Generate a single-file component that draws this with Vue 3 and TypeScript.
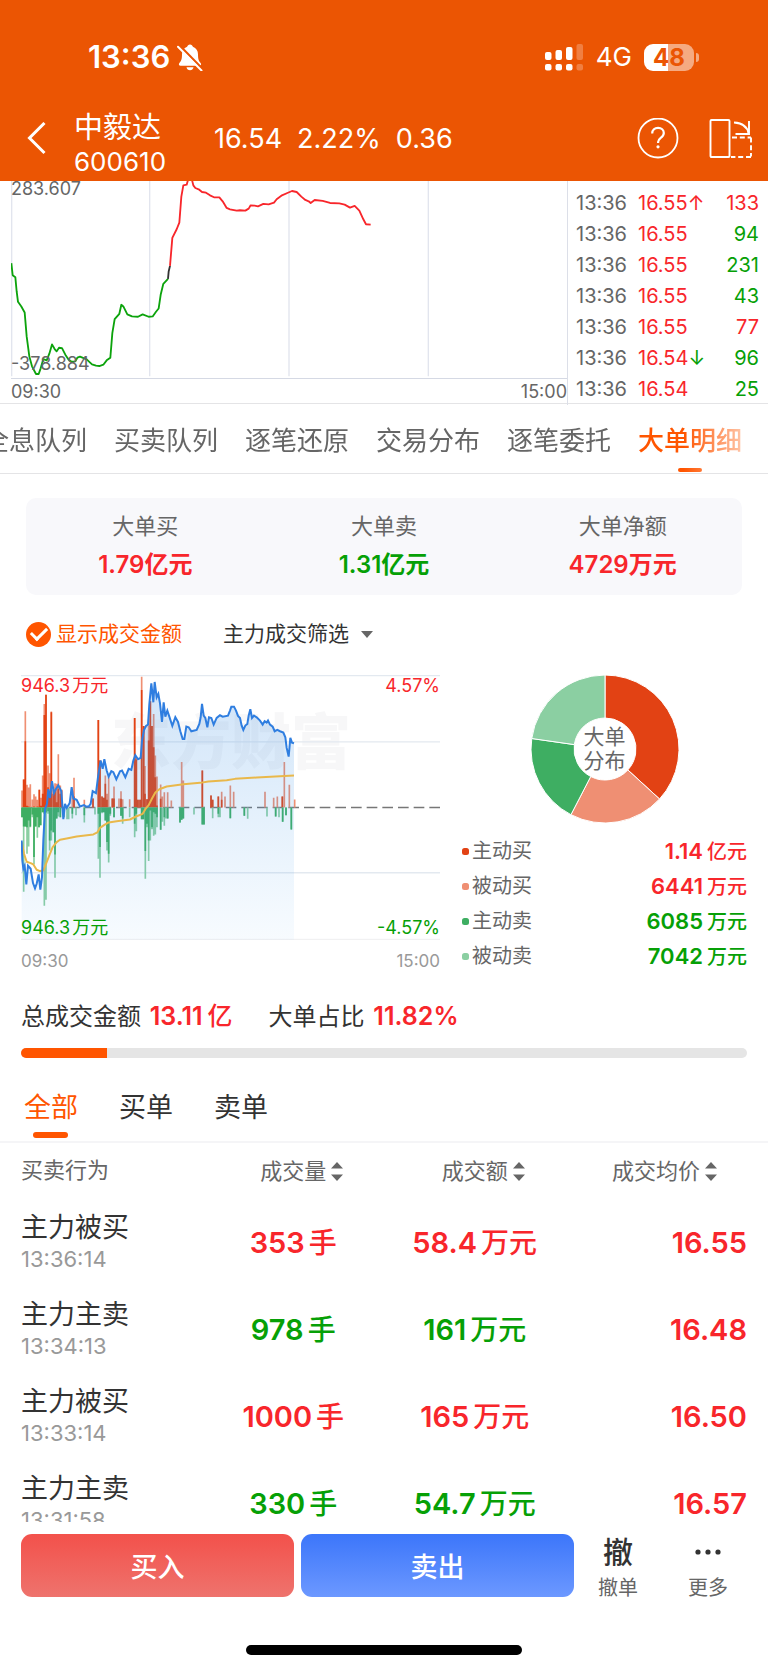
<script setup lang="ts">
import { ref, computed } from 'vue'

type Tone = 'up' | 'down'

interface Tick { price: string; mark?: '↑' | '↓'; markTone?: Tone; qty: string; tone: Tone }
const ticks: Tick[] = [
  { price: '16.55', mark: '↑', markTone: 'up', qty: '133', tone: 'up' },
  { price: '16.55', qty: '94', tone: 'down' },
  { price: '16.55', qty: '231', tone: 'down' },
  { price: '16.55', qty: '43', tone: 'down' },
  { price: '16.55', qty: '77', tone: 'up' },
  { price: '16.54', mark: '↓', markTone: 'down', qty: '96', tone: 'down' },
  { price: '16.54', qty: '25', tone: 'down' },
]

const tabs = ['全息队列', '买卖队列', '逐笔还原', '交易分布', '逐笔委托', '大单明细']
const activeTab = ref('大单明细')

const stats: { label: string; value: string; tone: Tone }[] = [
  { label: '大单买', value: '1.79亿元', tone: 'up' },
  { label: '大单卖', value: '1.31亿元', tone: 'down' },
  { label: '大单净额', value: '4729万元', tone: 'up' },
]

const showAmount = ref(true)
const filters = ['全部', '买单', '卖单']
const activeFilter = ref('全部')

interface Share { label: string; num: string; unit: string; amount: number; color: string; tone: Tone }
const shares: Share[] = [
  { label: '主动买', num: '1.14', unit: '亿元', amount: 11400, color: '#e24214', tone: 'up' },
  { label: '被动买', num: '6441', unit: '万元', amount: 6441, color: '#ef8f73', tone: 'up' },
  { label: '主动卖', num: '6085', unit: '万元', amount: 6085, color: '#3eae62', tone: 'down' },
  { label: '被动卖', num: '7042', unit: '万元', amount: 7042, color: '#8bcfa2', tone: 'down' },
]

const slices = computed(() => {
  const total = shares.reduce((s, x) => s + x.amount, 0)
  const at = (r: number, a: number) => `${(74 + r * Math.sin(a)).toFixed(2)} ${(74 - r * Math.cos(a)).toFixed(2)}`
  let angle = 0
  return shares.map((s) => {
    const start = angle
    angle += (s.amount / total) * Math.PI * 2
    const large = angle - start > Math.PI ? 1 : 0
    return {
      color: s.color,
      d: `M${at(74, start)}A74 74 0 ${large} 1 ${at(74, angle)}L${at(31, angle)}A31 31 0 ${large} 0 ${at(31, start)}Z`,
    }
  })
})

const ratio = 11.82

interface Order { side: string; time: string; vol: string; amount: string; unit: string; price: string; tone: Tone }
const orders: Order[] = [
  { side: '主力被买', time: '13:36:14', vol: '353', amount: '58.4', unit: '万元', price: '16.55', tone: 'up' },
  { side: '主力主卖', time: '13:34:13', vol: '978', amount: '161', unit: '万元', price: '16.48', tone: 'down' },
  { side: '主力被买', time: '13:33:14', vol: '1000', amount: '165', unit: '万元', price: '16.50', tone: 'up' },
  { side: '主力主卖', time: '13:31:58', vol: '330', amount: '54.7', unit: '万元', price: '16.57', tone: 'down' },
]

/* Large-order bars: [x, end of active part, end of passive part]; 441 is the zero line. */
const ZERO = 441
type Bar = [number, number, number]
const buys: Bar[] = [
  [66, 441, 390], [71, 357, 357], [76, 242, 152], [81, 436, 373], [86, 438, 381], [91, 441, 371], [97, 441, 417],
  [102, 438, 401], [107, 441, 408], [112, 438, 418], [118, 388, 388], [123, 436, 412], [128, 400, 345],
  [133, 163, 130], [138, 102, 102], [144, 380, 315], [149, 400, 338], [154, 155, 153], [160, 400, 380],
  [165, 390, 368], [170, 425, 370], [175, 385, 281], [181, 400, 375], [186, 425, 388], [217, 441, 390],
  [222, 408, 352], [253, 441, 418], [279, 414, 414], [295, 178, 178], [300, 300, 300], [306, 408, 408],
  [311, 412, 412], [316, 370, 345], [321, 418, 400], [326, 441, 350], [337, 414, 414], [342, 414, 378],
  [357, 441, 414], [363, 415, 392], [368, 441, 416], [389, 441, 416], [404, 172, 172], [409, 297, 290],
  [414, 418, 418], [420, 418, 418], [425, 88, 48], [431, 196, 196], [435, 400, 316], [441, 416, 416],
  [446, 240, 195], [451, 122, 122], [456, 196, 196], [461, 260, 160], [466, 350, 285], [471, 435, 348],
  [482, 415, 372], [487, 441, 408], [493, 441, 395], [503, 441, 395], [514, 441, 420], [545, 441, 304],
  [550, 441, 360], [607, 330, 330], [633, 405, 405], [638, 418, 418], [655, 408, 408], [665, 418, 394],
  [675, 441, 408], [691, 441, 375], [701, 441, 394], [795, 441, 394], [821, 441, 412], [832, 441, 408],
  [847, 408, 408], [853, 441, 304], [868, 441, 373], [884, 441, 417],
]
const sells: Bar[] = [
  [66, 470, 470], [71, 498, 694], [76, 498, 498], [81, 500, 580], [86, 480, 558], [91, 498, 500], [97, 462, 470],
  [102, 590, 612], [107, 498, 498], [112, 470, 532], [117, 500, 500], [122, 494, 494], [128, 455, 455],
  [133, 460, 736], [138, 456, 718], [144, 452, 460], [149, 540, 570], [154, 510, 540], [160, 515, 515],
  [165, 582, 652], [170, 474, 474], [175, 455, 468], [181, 470, 470], [191, 470, 470], [201, 441, 476],
  [206, 441, 476], [217, 460, 474], [228, 441, 464], [253, 464, 486], [285, 441, 462], [295, 460, 595],
  [300, 560, 652], [306, 455, 458], [311, 455, 455], [316, 480, 480], [321, 545, 570], [326, 580, 606],
  [331, 460, 466], [342, 470, 470], [363, 466, 466], [368, 474, 490], [389, 441, 470], [404, 490, 530],
  [409, 460, 512], [425, 476, 476], [430, 476, 476], [436, 572, 655], [441, 490, 500], [446, 540, 602],
  [451, 450, 540], [456, 500, 506], [461, 455, 526], [466, 460, 522], [471, 470, 500], [482, 508, 508],
  [487, 441, 484], [493, 470, 496], [498, 441, 474], [503, 474, 474], [540, 486, 486], [545, 478, 478],
  [550, 474, 474], [582, 441, 462], [607, 492, 492], [612, 492, 492], [638, 441, 473], [655, 460, 470],
  [660, 441, 470], [691, 473, 473], [733, 466, 466], [743, 441, 475], [801, 441, 468], [827, 468, 468],
  [837, 441, 470], [848, 484, 484], [858, 464, 464], [874, 507, 507],
]
const barPath = (list: Bar[], pick: 1 | 2) =>
  list.filter((b) => b[pick] !== ZERO).map((b) => `M${b[0]} ${ZERO}V${b[pick]}`).join('')

const pricePoints =
  '65,540 67,600 70,625 74,616 79,672 84,616 92,625 99,668 105,684 110,670 116,642 121,688 126,650 130,540 135,445 141,430 145,386 150,412 156,362 162,398 168,385 175,374 184,392 190,476 195,430 200,442 205,434 209,428 215,380 220,414 230,418 240,438 252,434 258,438 266,438 272,430 278,392 288,398 294,350 302,300 308,325 313,296 320,330 326,348 334,332 340,335 349,356 360,332 366,330 376,350 386,325 394,328 400,300 406,284 414,296 422,292 426,240 432,208 438,196 444,192 448,130 454,68 460,125 464,64 470,110 475,100 480,128 486,184 491,125 496,168 502,150 508,168 517,196 526,170 534,184 541,212 548,235 553,235 559,198 566,200 574,212 590,208 598,190 602,170 606,130 611,165 616,172 622,200 627,170 634,172 641,192 650,172 660,164 668,168 684,165 690,150 694,138 702,138 708,150 714,166 720,172 725,195 730,208 736,195 742,190 746,165 751,146 756,172 762,165 770,170 780,180 788,192 794,182 800,186 804,180 810,192 818,198 824,212 832,208 840,212 850,216 856,230 860,262 866,288 871,232 876,246 882,248'
const averagePoints =
  '65,545 72,580 80,604 92,608 100,612 110,628 120,632 130,630 138,610 148,585 158,560 170,545 180,538 200,534 230,528 280,522 292,516 300,502 312,494 326,486 350,482 390,477 408,468 428,460 436,446 446,434 456,414 466,396 478,386 500,378 550,371 600,367 625,363 680,359 705,355 770,351 882,345'
const areaPoints = `65,838 ${pricePoints} 882,838`
</script>

<template>
  <main class="screen">
    <header class="top">
      <div class="status">
        <div class="clock">
          <span>13:36</span>
          <svg width="26" height="27" viewBox="0 0 26 27" fill="#fff" aria-label="静音">
            <path d="M13 0.500c-1.500 0-2.600 1-2.900 2.300C6.800 4 5 6.800 5 10.300c0 5-.8 6.700-2.600 8.700-1 1.100-.5 2.700 1.100 2.700h19c1.600 0 2.100-1.600 1.100-2.700-1.800-2-2.600-3.700-2.600-8.700 0-3.500-1.800-6.300-5.100-7.500C15.600 1.500 14.500.5 13 .5z" />
            <path d="M9.500 23.300h7c-.4 1.800-1.700 3-3.500 3s-3.100-1.200-3.500-3z" />
            <path d="M2.600 1.500L26 25.500" stroke="#eb5503" stroke-width="2.400" />
            <path d="M1 2.800L24.500 26.500" stroke="#fff" stroke-width="2" stroke-linecap="round" />
          </svg>
        </div>
        <div class="radio">
          <svg width="39" height="27" viewBox="0 0 39 27" fill="#fff" aria-hidden="true">
            <rect x="0" y="8" width="6.500" height="8" rx="2" />
            <rect x="10.500" y="6" width="6.500" height="10" rx="2" />
            <rect x="21" y="3" width="6.500" height="13" rx="2" />
            <rect x="31.500" y="0" width="6.500" height="16" rx="2" opacity=".25" />
            <rect x="0" y="20" width="6.500" height="6.500" rx="2" />
            <rect x="10.500" y="20" width="6.500" height="6.500" rx="2" />
            <rect x="21" y="20" width="6.500" height="6.500" rx="2" />
            <rect x="31.500" y="20" width="6.500" height="6.500" rx="2" opacity=".25" />
          </svg>
          <span class="net">4G</span>
          <span class="battery"><b>48</b></span>
        </div>
      </div>
      <div class="nav">
        <button class="icon-btn" type="button" aria-label="返回">
          <svg width="20" height="34" viewBox="0 0 20 34" fill="none" stroke="#fff" stroke-width="3">
            <path d="M17.500 1L2.500 16l15 15" />
          </svg>
        </button>
        <h1 class="stock"><span class="stock-name">中毅达</span><span class="stock-code">600610</span></h1>
        <p class="quote"><span>16.54</span><span>2.22%</span><span>0.36</span></p>
        <button class="icon-btn help" type="button" aria-label="帮助">
          <svg width="42" height="42" viewBox="0 1 42 42" fill="none" stroke="#fff" stroke-width="1.800">
            <circle cx="21" cy="21" r="19.500" />
            <path d="M15.200 16.600c0-3.600 2.500-5.700 5.900-5.700 3.300 0 5.700 2 5.700 5 0 2.600-1.500 3.800-3.100 5-1.700 1.300-2.600 2.200-2.600 4.200v1" stroke-width="2.200" />
            <circle cx="21" cy="29.800" r="1.600" fill="#fff" stroke="none" />
          </svg>
        </button>
        <button class="icon-btn" type="button" aria-label="横屏">
          <svg width="44" height="40" viewBox="0 1 44 40" fill="none" stroke="#fff" stroke-width="1.900">
            <rect x="1.500" y="2" width="19" height="37" rx="1" />
            <path d="M25 4.500c8 .5 13.500 4.500 14.500 11M40 3V16H26.500" />
            <path d="M23 19.500h19M42 19.500v19M42 39H22" stroke-dasharray="5 2.800" />
          </svg>
        </button>
      </div>
    </header>

    <section class="market">
      <div class="flow">
        <div class="flow-plot">
          <svg viewBox="33 33 1668 592" preserveAspectRatio="none" fill="none" aria-hidden="true">
            <path d="M35 33V620M449 33V620M867 33V620M1285 33V620" stroke="#e2e5ee" stroke-width="4" />
            <g stroke-width="5.500" stroke-linejoin="round">
              <polyline stroke="#0ca30c" points="34,280 38,316 46,322 50,365 54,396 64,410 74,428 80,500 88,560 96,590 108,613 116,613 122,596 130,568 140,572 148,552 156,524 164,538 170,545 177,534 186,535 196,555 206,570 215,576 226,575 232,564 240,561 260,569 276,584 288,588 298,589 310,585 320,572 331,564 337,490 344,448 358,432 364,405 370,410 382,434 396,440 414,441 428,434 446,441 458,440 468,426 476,416 482,375 490,342 504,327" />
              <polyline stroke="#333" points="504,327 506,305 510,288" />
              <polyline stroke="#f8262b" points="510,288 514,240 517,204 530,178 538,158 544,80 550,46 560,44 564,30 576,30 580,46 586,54 596,58 606,66 618,68 630,76 642,82 658,82 668,94 680,114 690,118 710,122 720,121 736,122 746,116 752,106 764,107 774,109 790,102 806,103 822,98 830,88 846,76 862,69 876,63 890,66 904,80 916,90 926,94 932,99 944,90 968,93 990,99 1018,100 1034,104 1050,113 1064,108 1078,122 1090,148 1098,163 1112,164" />
            </g>
          </svg>
          <span class="flow-max">283.607</span>
          <span class="flow-min">-378.884</span>
        </div>
        <div class="flow-time"><span>09:30</span><span>15:00</span></div>
      </div>
      <ul class="ticks">
        <li v-for="(t, i) in ticks" :key="i">
          <span class="tick-time">13:36</span>
          <span class="up">{{ t.price }}<i v-if="t.mark" :class="t.markTone">{{ t.mark }}</i></span>
          <span class="tick-qty" :class="t.tone">{{ t.qty }}</span>
        </li>
      </ul>
    </section>

    <div class="tabs-wrap">
      <nav class="tabs">
        <button v-for="t in tabs" :key="t" type="button" :class="{ active: t === activeTab }" @click="activeTab = t">{{ t }}</button>
      </nav>
    </div>

    <dl class="stats">
      <div v-for="s in stats" :key="s.label">
        <dt>{{ s.label }}</dt>
        <dd :class="s.tone">{{ s.value }}</dd>
      </div>
    </dl>

    <div class="options">
      <label class="check"><input v-model="showAmount" type="checkbox" /><span>显示成交金额</span></label>
      <div class="picker">
        <select aria-label="主力成交筛选"><option>主力成交筛选</option></select>
        <svg width="12" height="7" viewBox="0 0 12 7" fill="#666" aria-hidden="true"><path d="M0 0h12L6 7z" /></svg>
      </div>
    </div>

    <section class="charts">
      <div class="trend">
        <div class="trend-plot">
          <span class="watermark" aria-hidden="true">东方财富</span>
          <svg viewBox="63 43 1257 796" preserveAspectRatio="none" fill="none" aria-hidden="true">
            <defs>
              <linearGradient id="area" x1="0" y1="0" x2="0" y2="1">
                <stop offset="0" stop-color="#3c8ce0" stop-opacity=".24" />
                <stop offset="1" stop-color="#3c9cf0" stop-opacity=".04" />
              </linearGradient>
            </defs>
            <path d="M63 45H1320M63 244H1320M63 637H1320" stroke="#e3e9f0" stroke-width="4" />
            <path d="M63 837H1320" stroke="#eeeef0" stroke-width="3" />
            <path d="M63 441H1320" stroke="#777" stroke-width="4" stroke-dasharray="32 15" stroke-dashoffset="-3" />
            <g stroke-width="5">
              <path :d="barPath(buys, 2)" stroke="#ef8f73" />
              <path :d="barPath(buys, 1)" stroke="#e24214" />
              <path :d="barPath(sells, 2)" stroke="#8bcfa2" />
              <path :d="barPath(sells, 1)" stroke="#3eae62" />
            </g>
            <polygon :points="areaPoints" fill="url(#area)" />
            <polyline :points="averagePoints" stroke="#e9b84b" stroke-width="6" stroke-linejoin="round" />
            <polyline :points="pricePoints" stroke="#2f7ee0" stroke-width="6" />
          </svg>
          <div class="axis axis-top up"><span>946.3<em>万元</em></span><span>4.57%</span></div>
          <div class="axis axis-bottom down"><span>946.3<em>万元</em></span><span>-4.57%</span></div>
        </div>
        <div class="trend-time"><span>09:30</span><span>15:00</span></div>
      </div>

      <div class="share">
        <div class="donut">
          <svg width="148" height="148" viewBox="0 0 148 148" aria-hidden="true">
            <path v-for="s in slices" :key="s.color" :d="s.d" :fill="s.color" stroke="#fff" stroke-width="1" />
          </svg>
          <span>大单<br />分布</span>
        </div>
        <ul class="legend">
          <li v-for="s in shares" :key="s.label">
            <svg width="7" height="7" viewBox="0 0 7 7" aria-hidden="true"><rect width="7" height="7" rx="2.500" :fill="s.color" /></svg>
            <span>{{ s.label }}</span>
            <b :class="s.tone">{{ s.num }}<em>{{ s.unit }}</em></b>
          </li>
        </ul>
      </div>
    </section>

    <section class="totals">
      <p><span>总成交金额 <b>13.11<em>亿</em></b></span><span>大单占比 <b>11.82%</b></span></p>
      <div class="meter" role="progressbar" aria-label="大单占比" :aria-valuenow="ratio"><i :style="{ width: ratio + '%' }"></i></div>
    </section>

    <nav class="filters">
      <button v-for="f in filters" :key="f" type="button" :class="{ active: f === activeFilter }" @click="activeFilter = f">{{ f }}</button>
    </nav>

    <div class="list">
      <table>
        <thead>
          <tr>
            <th scope="col" class="c-side">买卖行为</th>
            <th v-for="h in ['成交量', '成交额', '成交均价']" :key="h" scope="col" :class="{ 'c-price': h === '成交均价' }">
              <button type="button">
                {{ h }}<svg width="12" height="19" viewBox="0 0 12 19" fill="#666" aria-hidden="true"><path d="M6 0l6 6.500H0zM6 19l6-6.500H0z" /></svg>
              </button>
            </th>
          </tr>
        </thead>
        <tbody>
          <tr v-for="o in orders" :key="o.time">
            <td class="c-side"><span class="side">{{ o.side }}</span><time>{{ o.time }}</time></td>
            <td class="num" :class="o.tone">{{ o.vol }}<em>手</em></td>
            <td class="num" :class="o.tone">{{ o.amount }}<em>{{ o.unit }}</em></td>
            <td class="num c-price up">{{ o.price }}</td>
          </tr>
        </tbody>
      </table>
    </div>

    <footer class="bottom">
      <div class="actions">
        <button class="trade buy" type="button">买入</button>
        <button class="trade sell" type="button">卖出</button>
        <button class="mini" type="button"><span class="glyph" aria-hidden="true">撤</span><span>撤单</span></button>
        <button class="mini" type="button">
          <span class="glyph"><svg width="26" height="6" viewBox="0 0 26 6" fill="#333" aria-hidden="true"><circle cx="3" cy="3" r="2.600" /><circle cx="13" cy="3" r="2.600" /><circle cx="23" cy="3" r="2.600" /></svg></span>
          <span>更多</span>
        </button>
      </div>
      <div class="home"></div>
    </footer>
  </main>
</template>

<style>
body { background: #fff; }
</style>

<style scoped>
.screen, .screen * { box-sizing: border-box; }
.screen {
  display: flex; flex-direction: column; height: 100vh; overflow: hidden;
  background: #fff; color: #333; font-family: Inter, "Noto Sans CJK SC", sans-serif; font-size: 20px;
}
button { border: 0; background: none; padding: 0; margin: 0; font: inherit; color: inherit; cursor: pointer; }
h1, p, ul, dl, dd { margin: 0; padding: 0; font: inherit; }
ul { list-style: none; }
em, i { font-style: normal; }
svg { display: block; flex: none; }
.up { color: #f8262b; }
.down { color: #06a006; }

.top { flex: none; background: #eb5503; color: #fff; }
.status { display: flex; justify-content: space-between; height: 104px; padding: 10px 74px 0 88px; align-items: center; }
.clock { display: flex; align-items: center; gap: 7px; font-size: 31px; font-weight: 600; line-height: 36px; }
.radio { display: flex; align-items: center; gap: 12px; }
.net { font-size: 26px; line-height: 30px; }
.battery {
  position: relative; width: 50px; height: 27px; border-radius: 9px; text-align: center;
  background: linear-gradient(to right, #fff 48%, #f5aa81 48%); color: #eb5503; font-size: 24px; line-height: 27px;
}
.battery::after { content: ''; position: absolute; right: -5px; top: 9px; width: 3px; height: 9px; border-radius: 0 3px 3px 0; background: #f5aa81; }
.battery b { font-weight: 700; }
.nav { display: flex; align-items: center; height: 77px; padding: 0 15px 8px 27px; }
.stock { display: flex; flex-direction: column; margin-left: 27px; padding-top: 13px; }
.stock-name { font-size: 29px; line-height: 34px; }
.stock-code { font-size: 26px; line-height: 34px; }
.quote { display: flex; gap: 15px; margin-left: 48px; font-size: 27px; line-height: 34px; flex: 1; }
.help { margin-right: 30px; }

.market { flex: none; display: grid; grid-template-columns: 568fr 200fr; height: 223px; border-bottom: 1px solid #e4e4e6; }
.flow { border-right: 1px solid #dcdfe8; padding-left: 11px; color: #666; font-size: 18px; }
.flow-plot { position: relative; height: 198px; border-bottom: 1px solid #d5d9e4; }
.flow-plot svg { width: 100%; height: 100%; }
.flow-max, .flow-min { position: absolute; left: 0; line-height: 20px; }
.flow-max { top: -2px; }
.flow-min { bottom: 4px; }
.flow-time { display: flex; justify-content: space-between; line-height: 26px; }
.ticks { padding: 7px 9px 0 8px; height: 222px; overflow: hidden; font-size: 20px; }
.ticks li { display: grid; grid-template-columns: 62px 1fr auto; line-height: 31px; }
.tick-time { color: #666; }

.tabs-wrap { flex: none; border-bottom: 1px solid #e4e4e6; }
.tabs {
  display: flex; justify-content: flex-end; gap: 27px; height: 69px; padding-right: 26px; overflow: hidden;
  mask-image: linear-gradient(to right, #000 89%, rgba(0, 0, 0, .4) 96%, transparent);
}
.tabs button { position: relative; flex: none; font-size: 26px; line-height: 65px; padding-top: 4px; color: #666; white-space: nowrap; }
.tabs .active { color: #ff5500; font-weight: 500; }
.tabs .active::after { content: ''; position: absolute; left: 50%; bottom: 1px; width: 24px; height: 4px; margin-left: -12px; border-radius: 2px; background: #ff5500; }

.stats { flex: none; display: grid; grid-template-columns: repeat(3, 1fr); margin: 24px 26px 0 26px; padding: 12px 0; border-radius: 10px; background: #f8f8fb; text-align: center; }
.stats dt { font-size: 22px; line-height: 32px; color: #666; }
.stats dd { margin-top: 5px; font-size: 24px; line-height: 36px; font-weight: 600; }

.options { flex: none; display: flex; align-items: center; gap: 41px; margin-top: 21px; padding: 0 26px; height: 36px; font-size: 21px; }
.check { display: flex; align-items: center; gap: 5px; color: #ff5500; line-height: 30px; }
.check input {
  appearance: none; width: 25px; height: 25px; margin: 0; border-radius: 50%; border: 2px solid #bbb; display: grid; place-items: center;
}
.check input:checked { border: 0; background: #ff5500; }
.check input:checked::after { content: ''; width: 13px; height: 7px; margin-top: -4px; border: solid #fff; border-width: 0 0 3px 3px; transform: rotate(-45deg); }
.picker { display: flex; align-items: center; gap: 12px; }
.picker select { appearance: none; border: 0; padding: 0; background: none; font: inherit; color: #333; line-height: 30px; }

.charts { flex: none; display: grid; grid-template-columns: 419fr 285fr; gap: 22px; margin: 23px 21px 0; }
.trend-plot { position: relative; height: 265px; font-size: 18px; }
.trend-plot svg { position: relative; width: 100%; height: 100%; }
.watermark { position: absolute; left: 90px; top: 26px; font-size: 60px; line-height: 82px; font-weight: 900; color: #f7f7f8; }
.axis { position: absolute; left: 0; right: 0; display: flex; justify-content: space-between; line-height: 24px; }
.axis em { margin-left: 2px; }
.axis-top { top: -1px; }
.axis-bottom { bottom: 0; }
.trend-time { display: flex; justify-content: space-between; margin-top: 9px; font-size: 17px; line-height: 24px; color: #999; }
.donut { display: grid; place-items: center; }
.donut > * { grid-area: 1 / 1; }
.donut span { font-size: 21px; line-height: 24px; color: #666; text-align: center; }
.legend { margin-top: 11px; }
.legend li { display: flex; align-items: center; height: 35px; font-size: 22px; line-height: 35px; color: #666; }
.legend span { margin-left: 3px; flex: 1; font-size: 20px; }
.legend b { font-weight: 600; }
.legend em { margin-left: 4px; font-size: 20px; font-weight: 500; }

.totals { flex: none; margin: 24px 21px 0; font-size: 24px; line-height: 36px; }
.totals p { display: flex; gap: 36px; }
.totals b { margin-left: 2px; font-size: 25px; font-weight: 600; color: #f8262b; }
.totals em { margin-left: 5px; font-weight: 500; }
.meter { margin-top: 13px; height: 10px; border-radius: 5px; overflow: hidden; background: #e5e5e5; }
.meter i { display: block; height: 100%; background: #ff5500; }

.filters { flex: none; display: flex; gap: 41px; margin-top: 25px; padding-left: 24px; height: 60px; border-bottom: 2px solid #f5f5f7; font-size: 27px; }
.filters button { position: relative; line-height: 50px; padding-bottom: 8px; }
.filters .active { color: #ff5500; }
.filters .active::after { content: ''; position: absolute; left: 50%; bottom: 3px; width: 35px; height: 6px; margin-left: -18px; border-radius: 3px; background: #ff5500; }

.list { flex: 1; min-height: 0; overflow: hidden; padding: 0 21px; }
table { width: 100%; border-collapse: collapse; table-layout: fixed; text-align: center; }
th, td { padding: 0; vertical-align: middle; }
th { height: 56px; padding-bottom: 2px; font-size: 22px; line-height: 32px; font-weight: 400; color: #666; }
th button { display: inline-flex; align-items: center; gap: 5px; padding-left: 17px; vertical-align: middle; }
.c-side { width: 25%; text-align: left; }
.c-price { text-align: right; }
th.c-price { padding-right: 30px; }
td { height: 87px; }
.side { display: block; font-size: 27px; line-height: 32px; }
time { display: block; font-size: 22px; line-height: 30px; color: #999; }
.num { font-size: 29px; line-height: 40px; font-weight: 600; }
.num em { margin-left: 4px; font-size: 28px; font-weight: 500; }

.bottom { flex: none; padding: 12px 21px 14px; background: #fff; }
.actions { display: grid; grid-template-columns: 273fr 273fr 74fr 92fr; gap: 7px; align-items: start; height: 66px; margin-right: -7px; }
.trade { height: 63px; border-radius: 11px; color: #fff; font-size: 27px; font-weight: 500; }
.buy { background: linear-gradient(#f3514b, #ee736d); }
.sell { background: linear-gradient(#3c76fa, #6c98ff); }
.mini { display: flex; flex-direction: column; align-items: center; font-size: 20px; line-height: 24px; color: #666; }
.glyph { display: grid; place-items: center; height: 36px; margin-bottom: 6px; font-size: 30px; color: #333; font-weight: 500; }
.home { width: 38%; height: 10px; margin: 45px auto 0; border-radius: 5px; background: #000; }
</style>
